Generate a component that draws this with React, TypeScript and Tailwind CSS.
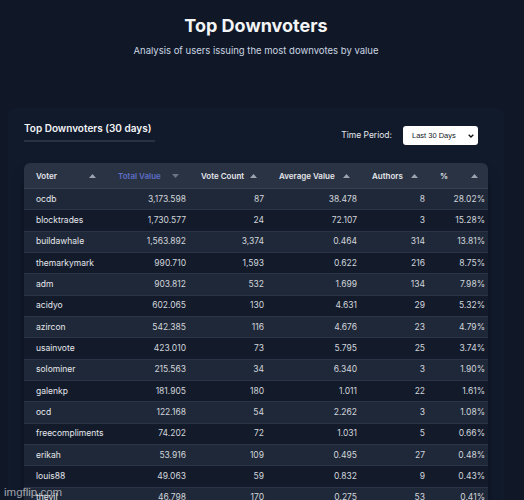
import React from 'react';

const rows: [string, string, string, string, string, string][] = [
  ['ocdb', '3,173.598', '87', '38.478', '8', '28.02%'],
  ['blocktrades', '1,730.577', '24', '72.107', '3', '15.28%'],
  ['buildawhale', '1,563.892', '3,374', '0.464', '314', '13.81%'],
  ['themarkymark', '990.710', '1,593', '0.622', '216', '8.75%'],
  ['adm', '903.812', '532', '1.699', '134', '7.98%'],
  ['acidyo', '602.065', '130', '4.631', '29', '5.32%'],
  ['azircon', '542.385', '116', '4.676', '23', '4.79%'],
  ['usainvote', '423.010', '73', '5.795', '25', '3.74%'],
  ['solominer', '215.563', '34', '6.340', '3', '1.90%'],
  ['galenkp', '181.905', '180', '1.011', '22', '1.61%'],
  ['ocd', '122.168', '54', '2.262', '3', '1.08%'],
  ['freecompliments', '74.202', '72', '1.031', '5', '0.66%'],
  ['erikah', '53.916', '109', '0.495', '27', '0.48%'],
  ['louis88', '49.063', '59', '0.832', '9', '0.43%'],
  ['thevil', '46.798', '170', '0.275', '53', '0.41%'],
];

const grid = 'grid grid-cols-[82px_83px_78px_93px_68px_60px]';

function SortIcon({ down }: { down?: boolean }) {
  return (
    <svg width="7" height="4" viewBox="0 0 7 4" className="shrink-0">
      {down ? (
        <path d="M0 0 L7 0 L3.5 4 Z" fill="#6b7280" />
      ) : (
        <path d="M0 4 L7 4 L3.5 0 Z" fill="#9ca3af" />
      )}
    </svg>
  );
}

function HeadCell({ label, active }: { label: string; active?: boolean }) {
  return (
    <div className="flex items-center justify-between pl-3 pr-[10px]">
      <span className={active ? 'text-[#5d6ec6]' : 'text-[#e5e7eb]'}>{label}</span>
      <SortIcon down={active} />
    </div>
  );
}

export default function App() {
  return (
    <div className="relative h-[500px] w-[524px] overflow-hidden bg-[#101828] font-['Inter',sans-serif] text-[#e5e7eb]">
      <div className="w-[512px]">
        {/* page heading */}
        <div className="flex flex-col items-center pt-[15px]">
          <h1 className="text-[18px] font-bold leading-[22px] text-[#f3f4f6]">Top Downvoters</h1>
          <p className="mt-[7px] text-[9.5px] leading-[14px] text-[#cbd5e1]">
            Analysis of users issuing the most downvotes by value
          </p>
        </div>

        {/* card */}
        <div className="mx-2 mt-[50px] rounded-lg bg-[#111a2b] px-4 pt-[13px]">
          <div className="flex items-end justify-between">
            <div className="border-b-2 border-[#283144] pb-[5px] pr-1 text-[10px] font-semibold leading-[14px] text-[#f3f4f6]">
              Top Downvoters (30 days)
            </div>
            <div className="mr-[10px] flex items-center gap-[11px] translate-y-[3px]">
              <span className="text-[8.5px] text-[#e5e7eb]">Time Period:</span>
              <div className="flex h-[19px] w-[75px] items-center justify-between rounded-[3px] bg-white pl-[9px] pr-[4px] text-[7.5px] text-[#111827] font-['Liberation_Sans',sans-serif]">
                <span>Last 30 Days</span>
                <svg width="6" height="4" viewBox="0 0 6 4">
                  <path d="M0.7 0.7 L3 3 L5.3 0.7" stroke="#111" strokeWidth="1.3" fill="none" />
                </svg>
              </div>
            </div>
          </div>

          {/* table */}
          <div className="mt-[21px] overflow-hidden rounded-t-md shadow-lg shadow-black/30">
            <div className={`${grid} h-[26px] items-center border-b border-[#374151] bg-[#2a3344] text-[8px] font-semibold`}>
              <HeadCell label="Voter" />
              <HeadCell label="Total Value" active />
              <HeadCell label="Vote Count" />
              <HeadCell label="Average Value" />
              <HeadCell label="Authors" />
              <HeadCell label="%" />
            </div>
            {rows.map((r, i) => (
              <div
                key={r[0]}
                className={`${grid} h-[21.33px] items-center border-b border-[#2a3446] text-[8.5px] text-[#d1d5db] ${
                  i % 2 === 0 ? 'bg-[#1f2838]' : 'bg-[#131b2b]'
                }`}
              >
                <div className="pl-3 text-[#e5e7eb]">{r[0]}</div>
                {r.slice(1).map((v, j) => (
                  <div key={j} className="pr-[3px] text-right">
                    {v}
                  </div>
                ))}
              </div>
            ))}
          </div>
        </div>
      </div>

      {/* watermark */}
      <div className="absolute bottom-[1px] left-[4px] font-['Liberation_Sans',sans-serif] text-[11.5px] leading-[14px] text-white/60">
        imgflip.com
      </div>
    </div>
  );
}
